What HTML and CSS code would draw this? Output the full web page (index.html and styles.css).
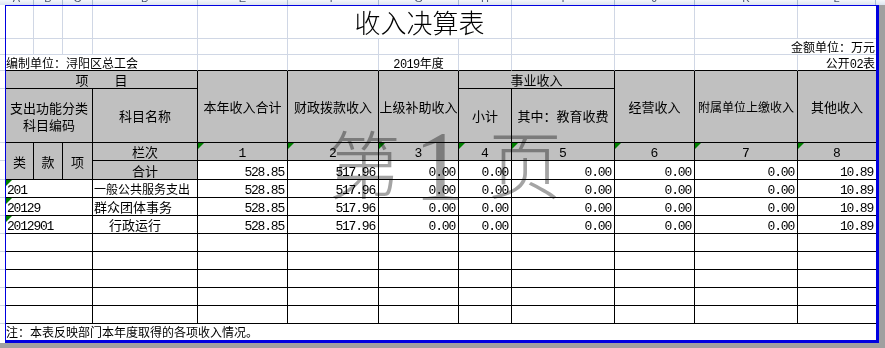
FILE: index.html
```html
<!DOCTYPE html>
<html lang="zh-CN">
<head>
<meta charset="utf-8">
<title>收入决算表</title>
<link rel="stylesheet" href="styles.css">
</head>
<body>
<div class="sheet">
  <div class="colhdr">
    <span class="ch w34">A</span><span class="ch w29">B</span><span class="ch w30">C</span><span class="ch w105">D</span><span class="ch w90">E</span><span class="ch w91">F</span><span class="ch w80">G</span><span class="ch w53">H</span><span class="ch w103">I</span><span class="ch w80">J</span><span class="ch w103">K</span><span class="ch w78">L</span><span class="ch ch-fill"></span>
  </div>
  <div class="main">
    <div class="gutter">
      <div class="g g34"></div><div class="g g16"></div><div class="g g16"></div><div class="g g18"></div><div class="g g54"></div><div class="g g18"></div><div class="g g19"></div>
      <div class="g g18"></div><div class="g g18"></div><div class="g g18"></div><div class="g g18"></div><div class="g g18"></div><div class="g g18"></div><div class="g g18"></div><div class="g g18"></div>
      <div class="g g16 nob"></div><div class="g g3 nob"></div>
    </div>
    <div class="page">
      <table class="grid">
        <colgroup>
          <col class="c1"><col class="c2"><col class="c3"><col class="c4"><col class="c5"><col class="c6"><col class="c7"><col class="c8"><col class="c9"><col class="c10"><col class="c11"><col class="c12">
        </colgroup>
        <tr class="rh33">
          <td class="gl"></td><td class="gl"></td><td class="gl"></td><td class="gl"></td><td class="gl"></td>
          <td class="gl title" colspan="3">收入决算表</td>
          <td class="gl"></td><td class="gl"></td><td class="gl"></td><td class="gl last"></td>
        </tr>
        <tr class="rh16">
          <td class="gl"></td><td class="gl"></td><td class="gl"></td><td class="gl"></td><td class="gl"></td>
          <td class="gl"></td><td class="gl"></td><td class="gl"></td><td class="gl"></td><td class="gl"></td>
          <td class="gl last meta rgt" colspan="2">金额单位：万元</td>
        </tr>
        <tr class="rh16">
          <td class="gl tb meta lft" colspan="4">编制单位：浔阳区总工会</td>
          <td class="gl tb"></td><td class="gl tb"></td>
          <td class="gl tb meta"><span class="d">2019</span>年度</td>
          <td class="gl tb"></td><td class="gl tb"></td><td class="gl tb"></td><td class="gl tb"></td>
          <td class="gl tb last meta rgt">公开<span class="d">02</span>表</td>
        </tr>
        <tr class="rh18">
          <td class="hd" colspan="4">项　　目</td>
          <td class="hd" rowspan="2">本年收入合计</td>
          <td class="hd" rowspan="2">财政拨款收入</td>
          <td class="hd" rowspan="2">上级补助收入</td>
          <td class="hd" colspan="2">事业收入</td>
          <td class="hd" rowspan="2">经营收入</td>
          <td class="hd small" rowspan="2">附属单位上缴收入</td>
          <td class="hd last" rowspan="2">其他收入</td>
        </tr>
        <tr class="rh54">
          <td class="hd wrap" colspan="3">支出功能分类科目编码</td>
          <td class="hd">科目名称</td>
          <td class="hd">小计</td>
          <td class="hd">其中：教育收费</td>
        </tr>
        <tr class="rh18">
          <td class="hd" rowspan="2">类</td><td class="hd" rowspan="2">款</td><td class="hd" rowspan="2">项</td>
          <td class="hd">栏次</td>
          <td class="hd n nc tri">1</td><td class="hd n nc tri">2</td><td class="hd n nc tri">3</td><td class="hd n nc tri">4</td>
          <td class="hd n nc tri">5</td><td class="hd n nc tri">6</td><td class="hd n nc tri">7</td><td class="hd n nc tri last">8</td>
        </tr>
        <tr class="rh19">
          <td class="hd">合计</td>
          <td class="cd n">528.85</td><td class="cd n">517.96</td><td class="cd n">0.00</td><td class="cd n">0.00</td>
          <td class="cd n">0.00</td><td class="cd n">0.00</td><td class="cd n">0.00</td><td class="cd n last">10.89</td>
        </tr>
        <tr class="rh18">
          <td class="cd code tri" colspan="3">201</td>
          <td class="cd name small">一般公共服务支出</td>
          <td class="cd n">528.85</td><td class="cd n">517.96</td><td class="cd n">0.00</td><td class="cd n">0.00</td>
          <td class="cd n">0.00</td><td class="cd n">0.00</td><td class="cd n">0.00</td><td class="cd n last">10.89</td>
        </tr>
        <tr class="rh18">
          <td class="cd code tri" colspan="3">20129</td>
          <td class="cd name">群众团体事务</td>
          <td class="cd n">528.85</td><td class="cd n">517.96</td><td class="cd n">0.00</td><td class="cd n">0.00</td>
          <td class="cd n">0.00</td><td class="cd n">0.00</td><td class="cd n">0.00</td><td class="cd n last">10.89</td>
        </tr>
        <tr class="rh18">
          <td class="cd code tri" colspan="3">2012901</td>
          <td class="cd name indent">行政运行</td>
          <td class="cd n">528.85</td><td class="cd n">517.96</td><td class="cd n">0.00</td><td class="cd n">0.00</td>
          <td class="cd n">0.00</td><td class="cd n">0.00</td><td class="cd n">0.00</td><td class="cd n last">10.89</td>
        </tr>
        <tr class="rh18">
          <td class="cd" colspan="3"></td><td class="cd"></td><td class="cd"></td><td class="cd"></td><td class="cd"></td><td class="cd"></td>
          <td class="cd"></td><td class="cd"></td><td class="cd"></td><td class="cd last"></td>
        </tr>
        <tr class="rh18">
          <td class="cd" colspan="3"></td><td class="cd"></td><td class="cd"></td><td class="cd"></td><td class="cd"></td><td class="cd"></td>
          <td class="cd"></td><td class="cd"></td><td class="cd"></td><td class="cd last"></td>
        </tr>
        <tr class="rh18">
          <td class="cd" colspan="3"></td><td class="cd"></td><td class="cd"></td><td class="cd"></td><td class="cd"></td><td class="cd"></td>
          <td class="cd"></td><td class="cd"></td><td class="cd"></td><td class="cd last"></td>
        </tr>
        <tr class="rh18">
          <td class="cd" colspan="3"></td><td class="cd"></td><td class="cd"></td><td class="cd"></td><td class="cd"></td><td class="cd"></td>
          <td class="cd"></td><td class="cd"></td><td class="cd"></td><td class="cd last"></td>
        </tr>
        <tr class="rh18">
          <td class="cd" colspan="3"></td><td class="cd"></td><td class="cd"></td><td class="cd"></td><td class="cd"></td><td class="cd"></td>
          <td class="cd"></td><td class="cd"></td><td class="cd"></td><td class="cd last"></td>
        </tr>
        <tr class="rh16">
          <td class="note" colspan="12">注：本表反映部门本年度取得的各项收入情况。</td>
        </tr>
      </table>
      <div class="watermark">
        <span class="wm wm1">第</span><span class="wm wm2">1</span><span class="wm wm3">页</span>
      </div>
    </div>
  </div>
</div>
</body>
</html>
```

FILE: styles.css
```css
* { box-sizing: border-box; }
html, body { margin: 0; padding: 0; }
body {
  background: #a0a0a0;
  color: #000;
  font-family: "Noto Sans CJK SC", "Noto Sans", sans-serif;
}
.sheet {
  width: 885px;
  height: 348px;
  overflow: hidden;
  background: #a0a0a0;
}

/* column header strip (cut off at the top) */
.colhdr {
  display: flex;
  height: 5px;
  overflow: hidden;
  background: linear-gradient(#f4f7fb, #dce4ef);
}
.ch {
  flex: none;
  height: 14px;
  margin-top: -9px;
  border-right: 1px solid #a9bcd2;
  font: 11px/14px "Liberation Sans", sans-serif;
  color: #4a586b;
  text-align: center;
}
.ch-fill { flex: 1; border-right: 0; }
.w34 { width: 34px; } .w29 { width: 29px; } .w30 { width: 30px; } .w105 { width: 105px; }
.w90 { width: 90px; } .w91 { width: 91px; } .w80 { width: 80px; } .w53 { width: 53px; }
.w103 { width: 103px; } .w78 { width: 78px; }

.main { display: flex; height: 338px; }
.gutter {
  flex: none;
  width: 5px;
  background: #fff;
  display: flex;
  flex-direction: column;
}
.g { flex: none; border-bottom: 1px solid #d0d7e5; }
.g34 { height: 34px; } .g16 { height: 16px; } .g18 { height: 18px; } .g54 { height: 54px; }
.g19 { height: 19px; } .g3 { height: 3px; }
.g.nob { border-bottom: 0; }

.page {
  position: relative;
  flex: none;
  width: 874px;
  height: 338px;
  background: #fff;
  border-style: solid;
  border-color: #0000e0;
  border-width: 1px 3px 3px 1px;
  overflow: hidden;
}

/* the spreadsheet grid */
.grid {
  width: 870px;
  table-layout: fixed;
  border-collapse: separate;
  border-spacing: 0;
}
.c1 { width: 28px; } .c2 { width: 29px; } .c3 { width: 30px; } .c4 { width: 105px; }
.c5 { width: 90px; } .c6 { width: 91px; } .c7 { width: 80px; } .c8 { width: 53px; }
.c9 { width: 103px; } .c10 { width: 80px; } .c11 { width: 103px; } .c12 { width: 78px; }

.rh33 { height: 33px; } .rh16 { height: 16px; } .rh18 { height: 18px; }
.rh54 { height: 54px; } .rh19 { height: 19px; }

.grid td {
  padding: 0;
  white-space: nowrap;
  font-size: 13px;
  line-height: 17px;
  text-align: center;
  vertical-align: middle;
}
.grid .gl {
  border-right: 1px solid #d0d7e5;
  border-bottom: 1px solid #d0d7e5;
}
.grid .tb { border-bottom-color: #000; }
.grid .hd {
  background: #c0c0c0;
  border-right: 1px solid #000;
  border-bottom: 1px solid #000;
}
.grid .cd {
  background: #fff;
  border-right: 1px solid #000;
  border-bottom: 1px solid #000;
}
.grid .last { border-right-width: 0; }

.grid .title {
  font-size: 26px;
  line-height: 32px;
  font-weight: 300;
  padding-left: 40px;
}
.grid .meta { font-size: 12px; line-height: 15px; }
.grid .lft { text-align: left; }
.grid .rgt { text-align: right; padding-right: 1px; }
.grid .small { font-size: 12px; }
.grid .wrap { white-space: normal; }

.grid .n {
  font-family: "Liberation Mono", monospace;
  letter-spacing: -1.2px;
  text-align: right;
  padding-right: 3px;
  vertical-align: bottom;
  line-height: 13px;
}
.grid .nc { text-align: center; letter-spacing: 0; padding-right: 0; }
.grid .code {
  font-family: "Liberation Mono", monospace;
  letter-spacing: -1.2px;
  text-align: left;
  padding-left: 1px;
  vertical-align: bottom;
  line-height: 13px;
}
.grid .name {
  text-align: left;
  padding-left: 1px;
  vertical-align: bottom;
  line-height: 17px;
}
.grid .indent { padding-left: 16px; }
.grid .note {
  font-size: 12px;
  line-height: 16px;
  text-align: left;
}
.d {
  font-family: "Liberation Mono", monospace;
  letter-spacing: -0.6px;
  line-height: 0;
}

/* green "number stored as text" markers */
.tri { position: relative; }
.tri::before {
  content: "";
  position: absolute;
  left: 0;
  top: 0;
  border-style: solid;
  border-width: 6px 6px 0 0;
  border-color: #008000 transparent transparent transparent;
}

/* page watermark */
.watermark {
  position: absolute;
  inset: 0;
  pointer-events: none;
  mix-blend-mode: multiply;
  color: #a4a4a4;
}
.wm { position: absolute; line-height: 1; font-weight: 300; }
.wm1 { left: 321px; top: 118px; font-size: 74px; }
.wm2 { left: 408px; top: 111px; font-size: 100px; font-family: "Liberation Serif", serif; font-weight: 400; }
.wm3 { left: 482px; top: 118px; font-size: 74px; }
```
